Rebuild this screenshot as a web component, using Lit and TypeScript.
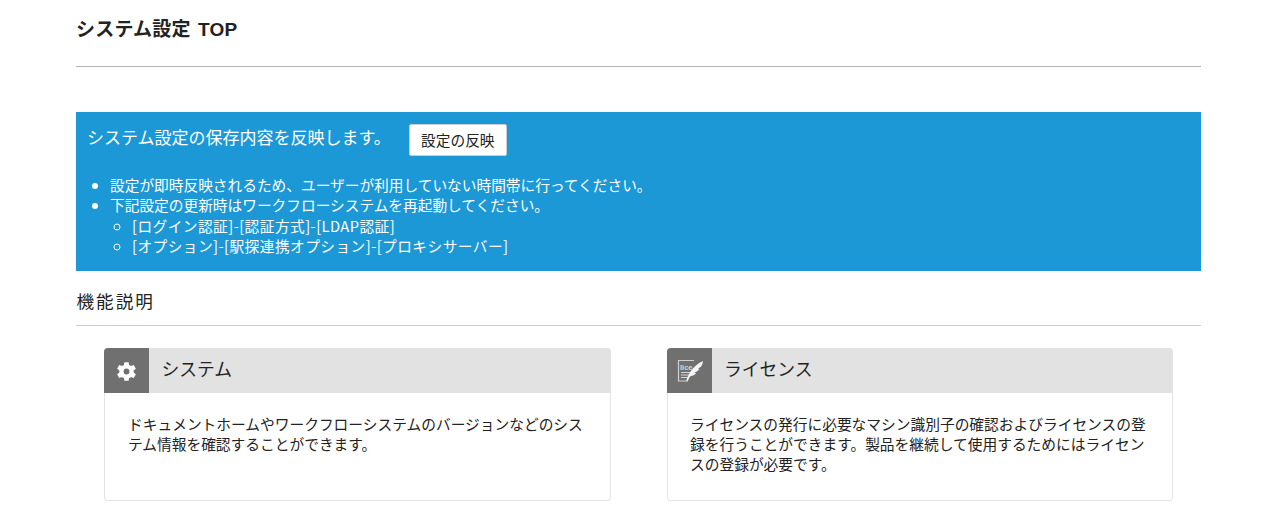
import { LitElement, html, css, svg } from "lit";
import { customElement } from "lit/decorators.js";

const gear = svg`<path fill="#fff" transform="translate(22.5 23.5) scale(1.17) translate(-11.2 -11.8)" d="M17.3 10.9 19.2 9.4 17.4 6.3 15.1 7.2C14.6 6.8 14 6.5 13.4 6.2L13 3.8H9.4L9 6.2C8.4 6.5 7.8 6.8 7.3 7.2L5 6.3 3.2 9.4 5.1 10.9C5.1 11.5 5.1 12.1 5.1 12.7L3.2 14.2 5 17.3 7.3 16.4C7.8 16.8 8.4 17.1 9 17.4L9.4 19.8H13L13.4 17.4C14 17.1 14.6 16.8 15.1 16.4L17.4 17.3 19.2 14.2 17.3 12.7C17.3 12.1 17.3 11.5 17.3 10.9ZM11.2 14.3A2.5 2.5 0 1 1 11.2 9.3 2.5 2.5 0 0 1 11.2 14.3Z"/>`;

const license = svg`
  <path d="M27 12.500H11.500V33H19" fill="none" stroke="#cfcfcf" stroke-width="1.2"/>
  <text x="13" y="21.500" font-family="Liberation Sans" font-size="7.500" font-weight="700" fill="#d6d6d6">lice</text>
  <path d="M14 24.500H25M14 27H24M14 29.500H21" stroke="#d6d6d6" stroke-width="1.100"/>
  <path fill="#f4f4f4" d="M19 33.500C21 27 25 18 36 13 35.500 18 33.500 19.500 31 20.500L32.500 21C31 23 29.500 24 27.500 24.500L29 25.500C27 27.500 25 27.800 23 28.500L20.500 33.500Z"/>`;

@customElement("app-root")
export class AppRoot extends LitElement {
  static styles = css`
    :host {
      display: block;
      font-family: "Noto Sans CJK JP", "Liberation Sans", sans-serif;
      color: #222;
      background: #fff;
      height: 516px;
      overflow: hidden;
    }
    .page {
      width: 1125px;
      margin-left: 76px;
      display: flex;
      flex-direction: column;
    }
    .title {
      margin: 0;
      height: 67px;
      box-sizing: border-box;
      padding-top: 17px;
      font-size: 19px;
      line-height: 26px;
      font-weight: 700;
      letter-spacing: 0.2px;
      word-spacing: 2px;
      color: #222;
      border-bottom: 1px solid #b4b4b4;
      font-family: "Liberation Sans", "Noto Sans CJK JP", sans-serif;
    }
    .notice {
      margin-top: 45px;
      height: 159px;
      box-sizing: border-box;
      background: #1c98d6;
      color: #fff;
      padding: 12px 11px 0;
      font-size: 14.7px;
      line-height: 20.3px;
    }
    .head {
      display: flex;
      align-items: flex-start;
      gap: 18px;
      height: 32px;
      font-size: 17px;
      line-height: 26px;
    }
    .btn {
      box-sizing: border-box;
      width: 98px;
      height: 32px;
      background: #fff;
      color: #222;
      border: 1px solid #ccc;
      border-radius: 2px;
      font: inherit;
      font-size: 14.7px;
      padding: 0;
    }
    ul {
      margin: 0;
      padding: 0 0 0 23px;
    }
    .notice > ul {
      margin-top: 19px;
    }
    ul ul {
      list-style: circle;
      padding-left: 22px;
      letter-spacing: 0.45px;
    }
    .section {
      margin: 0;
      height: 55px;
      box-sizing: border-box;
      padding: 18px 0 0 0.5px;
      font-size: 17.6px;
      line-height: 24px;
      font-weight: 400;
      letter-spacing: 2px;
      border-bottom: 1px solid #ccc;
    }
    .cards {
      display: flex;
      justify-content: space-between;
      padding: 22px 28px 0;
    }
    .card {
      width: 507px;
      height: 153px;
    }
    .card:last-child {
      width: 506px;
    }
    .card-head {
      display: flex;
      align-items: center;
      height: 45px;
      background: #e2e2e2;
      border-radius: 4px 4px 0 0;
      overflow: hidden;
    }
    .icon {
      width: 45px;
      height: 45px;
      background: #707070;
      flex: none;
    }
    .icon svg {
      display: block;
    }
    .card-title {
      margin: -6px 0 0 12.5px;
      font-size: 17.8px;
      font-weight: 400;
      color: #222;
    }
    .card:last-child .card-title {
      margin-left: 12px;
    }
    .card-body {
      box-sizing: border-box;
      height: 108px;
      margin: 0;
      padding: 21px 23px 0;
      border: 1px solid #e4e4e4;
      border-top: 0;
      border-radius: 0 0 4px 4px;
      font-size: 14.73px;
      line-height: 20.2px;
      color: #222;
    }
    .card:last-child .card-body {
      padding-left: 22px;
    }
  `;

  render() {
    return html`
      <div class="page">
        <h1 class="title">システム設定 TOP</h1>
        <div class="notice">
          <div class="head">
            <span>システム設定の保存内容を反映します。</span>
            <button class="btn">設定の反映</button>
          </div>
          <ul>
            <li>設定が即時反映されるため、ユーザーが利用していない時間帯に行ってください。</li>
            <li>
              下記設定の更新時はワークフローシステムを再起動してください。
              <ul>
                <li>[ログイン認証]-[認証方式]-[LDAP認証]</li>
                <li>[オプション]-[駅探連携オプション]-[プロキシサーバー]</li>
              </ul>
            </li>
          </ul>
        </div>
        <h2 class="section">機能説明</h2>
        <div class="cards">
          <div class="card">
            <div class="card-head">
              <div class="icon"><svg width="45" height="45" viewBox="0 0 45 45">${gear}</svg></div>
              <h3 class="card-title">システム</h3>
            </div>
            <p class="card-body">ドキュメントホームやワークフローシステムのバージョンなどのシステム情報を確認することができます。</p>
          </div>
          <div class="card">
            <div class="card-head">
              <div class="icon"><svg width="45" height="45" viewBox="0 0 45 45">${license}</svg></div>
              <h3 class="card-title">ライセンス</h3>
            </div>
            <p class="card-body">ライセンスの発行に必要なマシン識別子の確認およびライセンスの登録を行うことができます。製品を継続して使用するためにはライセンスの登録が必要です。</p>
          </div>
        </div>
      </div>
    `;
  }
}
